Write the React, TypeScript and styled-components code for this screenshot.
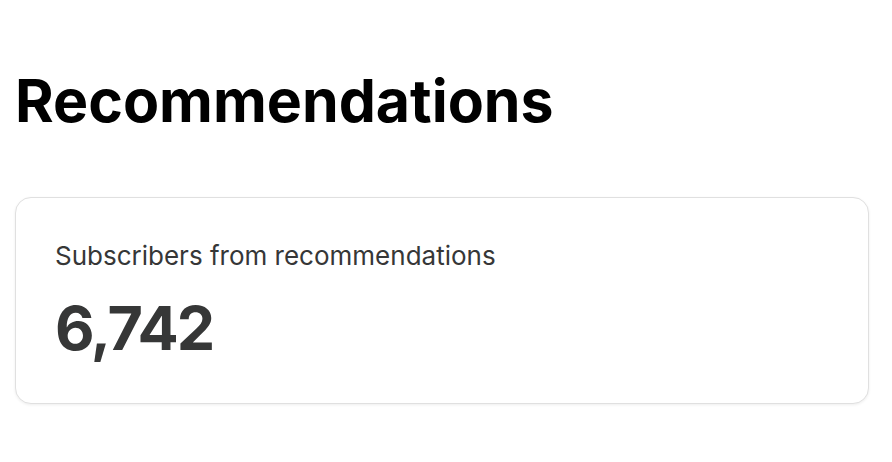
import React from 'react'
import styled, { createGlobalStyle } from 'styled-components'

const GlobalStyle = createGlobalStyle`
    body {
        margin: 0;
        background: #ffffff;
        font-family: Inter, "Liberation Sans", sans-serif;
    }
`;

const App = () => {
    return (
        <Page>
            <GlobalStyle />
            <Title>Recommendations</Title>
            <StatCard>
                <Label>Subscribers from recommendations</Label>
                <Value>6,742</Value>
            </StatCard>
        </Page>
    )
};

const Page = styled.div`
    display: flex;
    flex-direction: column;
    padding: 66px 23px 0 15px;
    width: 892px;
    height: 462px;
    box-sizing: border-box;
`;

const Title = styled.h1`
    margin: 0 0 61px 0;
    font-family: Inter, "Liberation Sans", sans-serif;
    font-size: 59px;
    font-weight: 700;
    line-height: 70px;
    letter-spacing: 0px;
    color: #000000;
`;

const StatCard = styled.div`
    display: flex;
    flex-direction: column;
    gap: 23px;
    padding: 42px 39px 42px;
    border: 1.5px solid #e0e0e0;
    border-radius: 16px;
    box-shadow: 0px 1px 3px rgba(0, 0, 0, 0.07);
    background: #ffffff;
`;

const Label = styled.div`
    font-size: 26px;
    font-weight: 400;
    line-height: 32px;
    color: #363737;
`;

const Value = styled.div`
    font-size: 61px;
    font-weight: 700;
    line-height: 66px;
    letter-spacing: -2px;
    color: #363737;
`;

export default App;
